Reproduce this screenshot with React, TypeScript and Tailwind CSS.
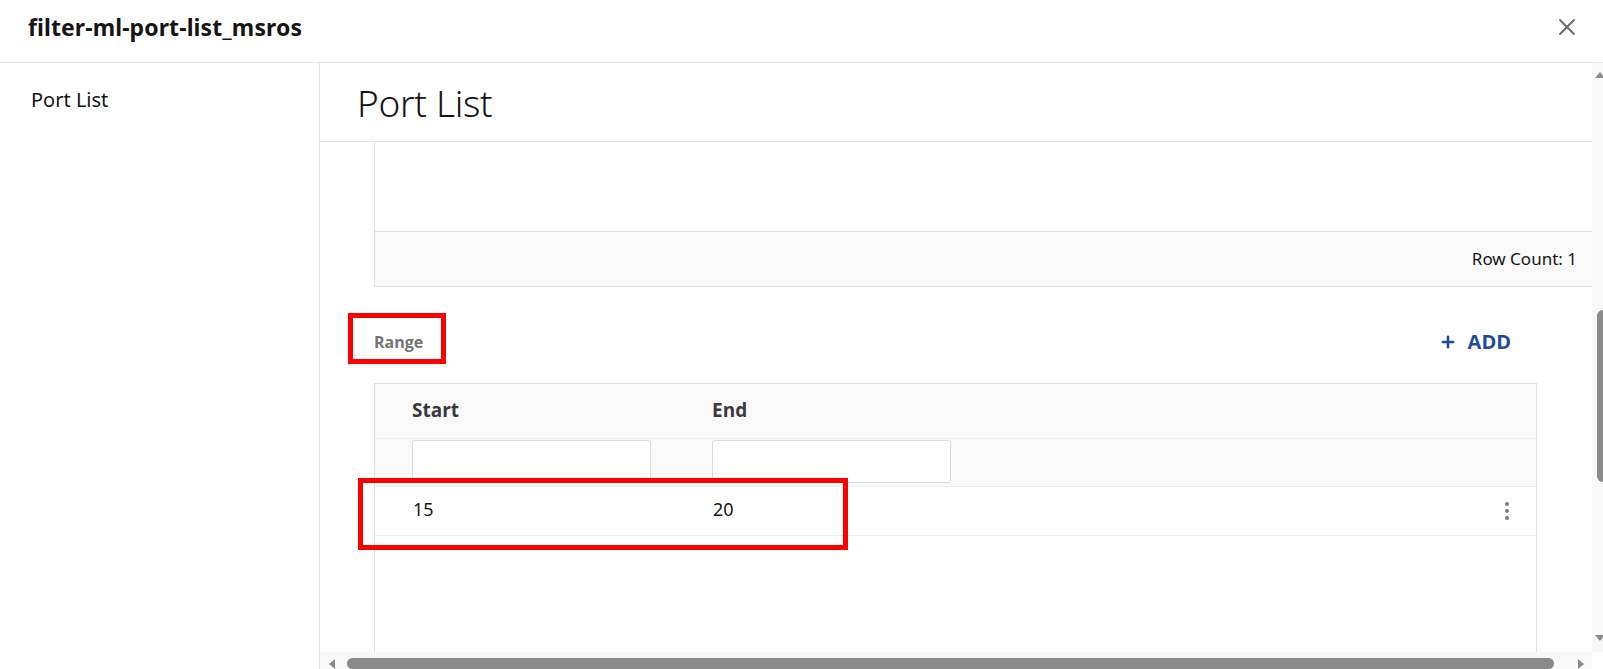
import { X, Plus } from 'lucide-react';

function VScrollbar() {
  return (
    <div className="flex w-[11px] shrink-0 flex-col items-end overflow-hidden bg-[#f8f8f8]">
      <div className="mt-[9px] h-0 w-0 border-x-[5px] border-b-[6px] border-x-transparent border-b-[#8a8a8a] mr-[-2px]" />
      <div className="mt-[232px] h-[172px] w-[6px] rounded-l-full bg-[#8a8a8a]" />
      <div className="flex-1" />
      <div className="mb-[11px] h-0 w-0 border-x-[5px] border-t-[6px] border-x-transparent border-t-[#8a8a8a] mr-[-2px]" />
    </div>
  );
}

function HScrollbar() {
  return (
    <div className="flex h-[17px] shrink-0 items-end bg-[#f8f8f8]">
      <div className="flex h-full flex-1 items-center pl-[9px] pt-[6px]">
        <div className="h-0 w-0 border-y-[5px] border-r-[6px] border-y-transparent border-r-[#8a8a8a]" />
        <div className="ml-[12px] h-[11px] w-[1207px] rounded-full bg-[#8a8a8a]" />
        <div className="ml-[24px] h-0 w-0 border-y-[5px] border-l-[6px] border-y-transparent border-l-[#8a8a8a]" />
      </div>
      <div className="h-full w-[11px] bg-white" />
    </div>
  );
}

function Kebab() {
  return (
    <div className="flex flex-col items-center gap-[3px] pt-[3px]">
      <span className="h-[4px] w-[4px] rounded-full bg-[#7a7a7a]" />
      <span className="h-[4px] w-[4px] rounded-full bg-[#7a7a7a]" />
      <span className="h-[4px] w-[4px] rounded-full bg-[#7a7a7a]" />
    </div>
  );
}

export default function App() {
  const ranges = [{ start: 15, end: 20 }];

  return (
    <div className="flex h-[669px] w-[1603px] flex-col overflow-hidden bg-white font-['Noto_Sans',sans-serif] text-[#161513]">
      <header className="flex h-[63px] shrink-0 items-center justify-between border-b border-[#e4e4e4] pb-[8px] pl-[28px] pr-[22px]">
        <h1 className="text-[23px] font-bold tracking-[0.1px]">filter-ml-port-list_msros</h1>
        <button className="text-[#6b6b6b]" title="Close">
          <X size={28} strokeWidth={1.6} />
        </button>
      </header>

      <div className="flex min-h-0 flex-1">
        <nav className="w-[320px] shrink-0 border-r border-[#e4e4e4] pl-[31px] pt-[23px]">
          <div className="text-[20px] leading-[28px]">Port List</div>
        </nav>

        <div className="flex min-w-0 flex-1 flex-col">
          <div className="flex min-h-0 flex-1">
            <main className="flex min-w-0 flex-1 flex-col overflow-hidden">
              <div className="flex h-[79px] shrink-0 items-center border-b border-[#e4e4e4] pl-[37px]">
                <h2 className="text-[37px] font-light leading-none tracking-[-0.3px]">Port List</h2>
              </div>

              {/* upper table, scrolled to its bottom */}
              <div className="ml-[54px] shrink-0 border-b border-l border-[#e0e0e0]">
                <div className="h-[89px]" />
                <div className="flex h-[55px] items-center justify-end border-t border-[#e0e0e0] bg-[#f9f9f9] pr-[15px] text-[17px]">
                  Row Count: 1
                </div>
              </div>

              <div className="ml-[54px] mr-[55px] flex flex-1 flex-col">
                <div className="flex h-[96px] shrink-0 items-center justify-between pt-[14px]">
                  <span className="relative text-[16px] font-bold leading-[20px] text-[#737373] font-['Open_Sans',sans-serif]">
                    Range
                    <span className="absolute -left-[26px] -right-[23px] -top-[19px] -bottom-[12px] border-[5px] border-[#ff0000]" />
                  </span>
                  <button className="mr-[26px] flex items-center gap-[11px] text-[20px] font-bold text-[#1f4b99] font-['Open_Sans',sans-serif]">
                    <Plus size={18} strokeWidth={3.4} />
                    ADD
                  </button>
                </div>

                <div className="flex-1 border-x border-t border-[#e0e0e0]">
                  <div className="flex h-[55px] items-center border-b border-[#ececec] bg-[#f9f9f9] pb-[1px] pl-[37px] text-[19px] font-bold text-[#3a3a3a] font-['Open_Sans',sans-serif]">
                    <div className="w-[300px]">Start</div>
                    <div>End</div>
                  </div>
                  <div className="flex h-[48px] items-start border-b border-[#ececec] bg-[#f9f9f9] pl-[37px] pt-[1px]">
                    <div className="w-[300px]">
                      <input className="h-[43px] w-[239px] rounded-[3px] border border-[#dcdcdc] bg-white" />
                    </div>
                    <input className="h-[43px] w-[239px] rounded-[3px] border border-[#dcdcdc] bg-white" />
                  </div>
                  {ranges.map((r) => (
                    <div key={r.start} className="relative flex h-[49px] items-center border-b border-[#ececec] pb-[3px] pl-[38px] pr-[27px] text-[18px]">
                      <div className="w-[300px]">{r.start}</div>
                      <div className="flex-1">{r.end}</div>
                      <Kebab />
                      <span className="absolute -left-[17px] -top-[9px] h-[72px] w-[490px] border-[5px] border-[#ff0000]" />
                    </div>
                  ))}
                </div>
              </div>
            </main>
            <VScrollbar />
          </div>
          <HScrollbar />
        </div>
      </div>
    </div>
  );
}
